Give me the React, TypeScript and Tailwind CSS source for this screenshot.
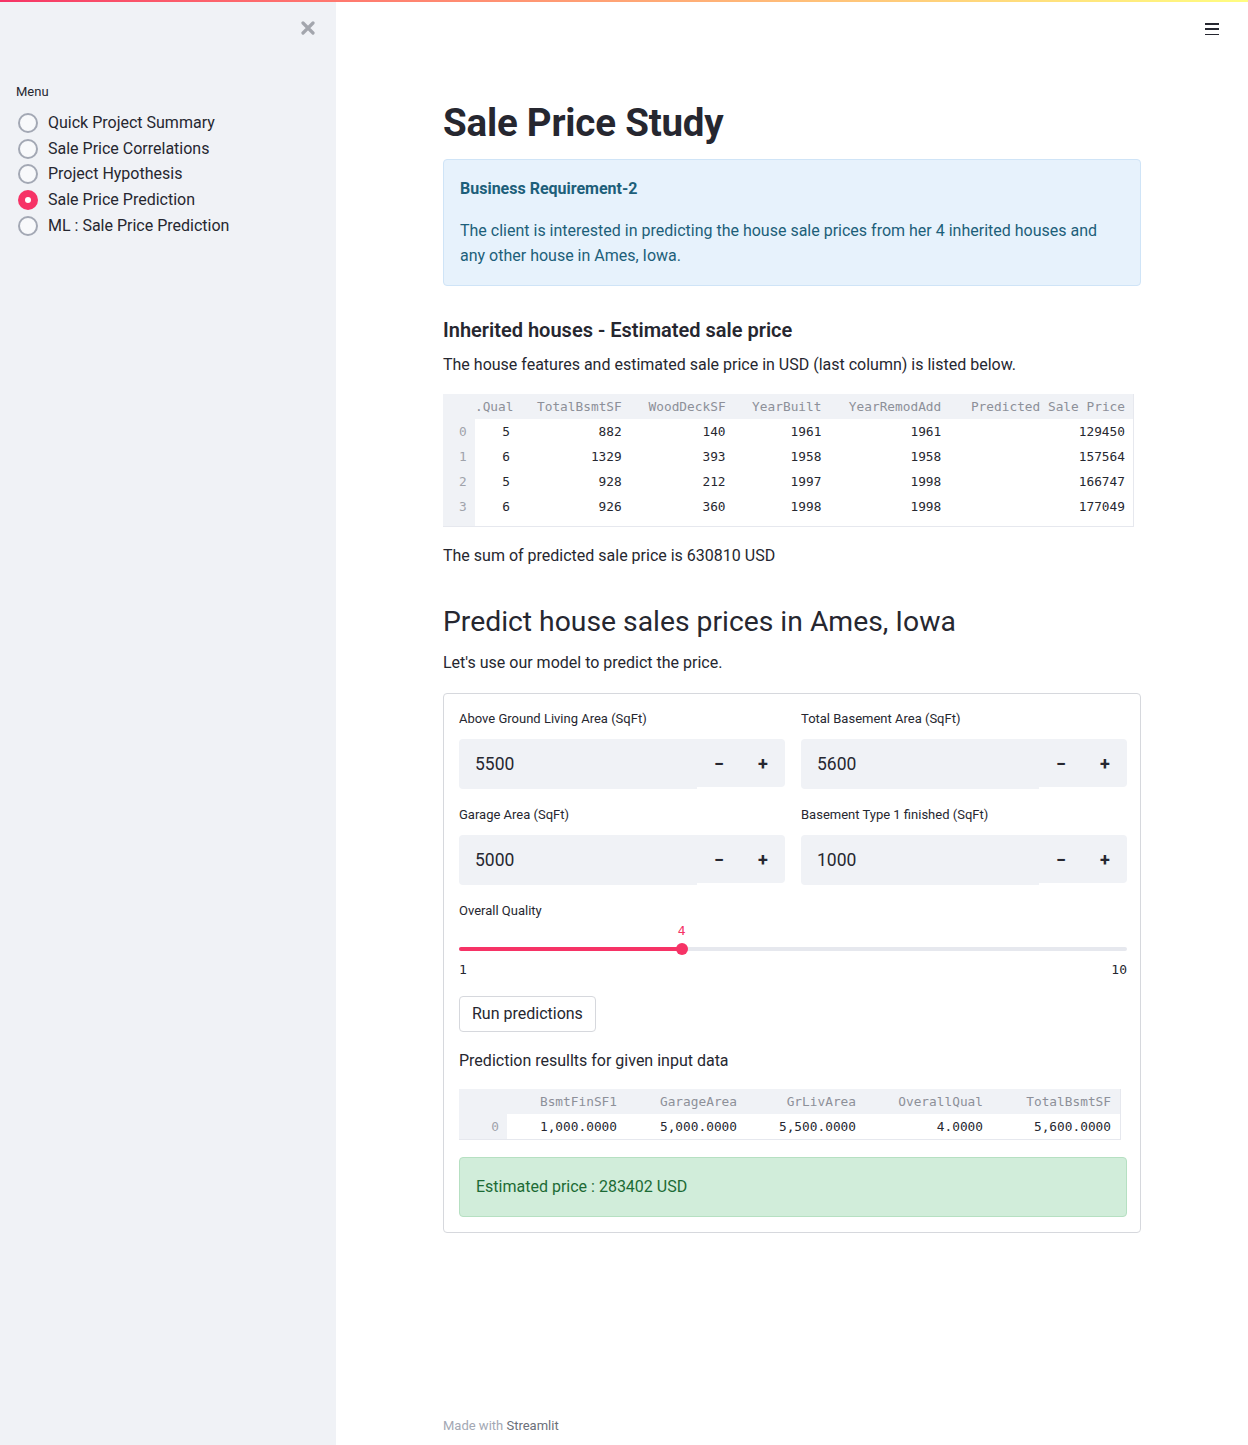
import React from 'react';

const SANS = "font-['Roboto','Liberation_Sans',sans-serif]";
const MONO = "font-['DejaVu_Sans_Mono','Liberation_Mono',monospace]";

const menuItems = [
  'Quick Project Summary',
  'Sale Price Correlations',
  'Project Hypothesis',
  'Sale Price Prediction',
  'ML : Sale Price Prediction',
];

const houseCols = ['.Qual', 'TotalBsmtSF', 'WoodDeckSF', 'YearBuilt', 'YearRemodAdd', 'Predicted Sale Price'];
const houseRows = [
  ['5', '882', '140', '1961', '1961', '129450'],
  ['6', '1329', '393', '1958', '1958', '157564'],
  ['5', '928', '212', '1997', '1998', '166747'],
  ['6', '926', '360', '1998', '1998', '177049'],
];

const predCols = ['BsmtFinSF1', 'GarageArea', 'GrLivArea', 'OverallQual', 'TotalBsmtSF'];
const predRow = ['1,000.0000', '5,000.0000', '5,500.0000', '4.0000', '5,600.0000'];

const Sidebar: React.FC = () => (
  <aside className="w-[336px] shrink-0 bg-[#f0f2f6] relative">
    <button className="absolute left-[301px] top-[21px] w-[14px] h-[14px] text-[#a3a6ad]" aria-label="Close sidebar">
      <svg viewBox="0 0 14 14" width="14" height="14">
        <path d="M2 2 L12 12 M12 2 L2 12" stroke="currentColor" strokeWidth="3.2" strokeLinecap="round" />
      </svg>
    </button>
    <div className="pt-[83px] pl-4">
      <div className="text-[13px] leading-[18px] text-[#262730]">Menu</div>
      <div className="mt-[9px] flex flex-col">
        {menuItems.map((item, i) => {
          const active = i === 3;
          return (
            <div key={item} className="flex items-center h-[25.75px]">
              <span className="w-8 flex items-center pl-[2px]">
                {active ? (
                  <span className="w-5 h-5 rounded-full bg-[#f63366] flex items-center justify-center">
                    <span className="w-[6px] h-[6px] rounded-full bg-white" />
                  </span>
                ) : (
                  <span className="w-5 h-5 rounded-full border-2 border-[#a3a8b4] bg-[#f8f9fb]" />
                )}
              </span>
              <span className="text-[16px] text-[#262730]">{item}</span>
            </div>
          );
        })}
      </div>
    </div>
  </aside>
);

const NumberInput: React.FC<{ label: string; value: string }> = ({ label, value }) => (
  <div>
    <div className="text-[13px] leading-[18px] text-[#262730]">{label}</div>
    <div className="mt-[11px] flex items-start">
      <div className="flex-1 h-[50px] bg-[#f0f2f6] rounded-l-[4px] flex items-center px-4 text-[17.5px] text-[#262730]">
        {value}
      </div>
      <div className="w-[88px] h-[48px] bg-[#f0f2f6] rounded-r-[4px] flex items-center">
        <span className="w-[44px] text-center text-[18px] font-bold text-[#262730]">−</span>
        <span className="w-[44px] text-center text-[18px] font-bold text-[#262730]">+</span>
      </div>
    </div>
  </div>
);

const HouseTable: React.FC = () => {
  const widths = ['w-[43px]', 'w-[112px]', 'w-[104px]', 'w-[96px]', 'w-[120px]', 'w-[184px]'];
  return (
    <div className={`mt-[17px] w-[691px] border-b border-r border-[#e6e8ee] ${MONO} text-[12.8px]`}>
      <div className="flex h-[25px] bg-[#f0f2f6] text-[#8d9099] items-center">
        <div className="w-[32px]" />
        {houseCols.map((c, i) => (
          <div key={c} className={`${widths[i]} text-right pr-2 whitespace-nowrap overflow-hidden`}>{c}</div>
        ))}
      </div>
      {houseRows.map((r, ri) => (
        <div key={ri} className="flex h-[25px] items-center">
          <div className="w-[32px] h-full bg-[#f0f2f6] text-[#a0a3ab] flex items-center pl-4">{ri}</div>
          {r.map((v, i) => (
            <div key={i} className={`${widths[i]} text-right pr-2 text-[#262730]`}>{v}</div>
          ))}
        </div>
      ))}
      <div className="flex h-[7px]">
        <div className="w-[32px] bg-[#f0f2f6]" />
      </div>
    </div>
  );
};

const PredTable: React.FC = () => {
  const widths = ['w-[119px]', 'w-[120px]', 'w-[119px]', 'w-[127px]', 'w-[128px]'];
  return (
    <div className={`mt-[16px] w-[662px] border-b border-r border-[#e6e8ee] ${MONO} text-[12.8px]`}>
      <div className="flex h-[25px] bg-[#f0f2f6] text-[#8d9099] items-center">
        <div className="w-[48px]" />
        {predCols.map((c, i) => (
          <div key={c} className={`${widths[i]} text-right pr-[9px]`}>{c}</div>
        ))}
      </div>
      <div className="flex h-[25px] items-center">
        <div className="w-[48px] h-full bg-[#f0f2f6] text-[#a0a3ab] flex items-center justify-end pr-[8px]">0</div>
        {predRow.map((v, i) => (
          <div key={i} className={`${widths[i]} text-right pr-[9px] text-[#262730]`}>{v}</div>
        ))}
      </div>
    </div>
  );
};

const Slider: React.FC = () => (
  <div>
    <div className="text-[13px] leading-[18px] text-[#262730]">Overall Quality</div>
    <div className="relative h-[20px] mt-[1px]">
      <span className={`absolute left-[33.33%] -translate-x-1/2 top-[2px] text-[13px] leading-[16px] text-[#f63366] ${MONO}`}>4</span>
    </div>
    <div className="relative h-[16px] flex items-center">
      <div className="w-full h-[4px] rounded-full bg-[#e6e8ee]" />
      <div className="absolute left-0 w-[33.33%] h-[4px] rounded-full bg-[#f63366]" />
      <div className="absolute left-[33.33%] -translate-x-1/2 w-[12px] h-[12px] rounded-full bg-[#f63366]" />
    </div>
    <div className={`mt-[4px] flex justify-between text-[13px] leading-[18px] text-[#262730] ${MONO}`}>
      <span>1</span>
      <span>10</span>
    </div>
  </div>
);

const App: React.FC = () => {
  return (
    <div className={`relative min-h-[1445px] flex ${SANS} text-[#262730]`}>
      <div className="absolute top-0 left-0 right-0 h-[2px] bg-gradient-to-r from-[#f63366] to-[#fffd80] z-10" />
      <Sidebar />
      <main className="flex-1 relative flex flex-col bg-white">
        <button className="absolute right-[29px] top-[22px] w-[14px] h-[14px] flex flex-col justify-between py-[1px]" aria-label="Menu">
          <span className="block h-[1.5px] bg-[#262730]" />
          <span className="block h-[1.5px] bg-[#262730]" />
          <span className="block h-[1.5px] bg-[#262730]" />
        </button>
        <div className="w-[698px] mx-auto pt-[96px]">
          <h1 className="text-[38.5px] leading-[54px] font-bold tracking-[-0.2px]">Sale Price Study</h1>
          <div className="mt-[9px] border border-[#cfe4f7] bg-[#e7f2fc] rounded-[4px] px-4 pt-[17px] pb-[17px] text-[#1d5f7a]">
            <div className="text-[16px] leading-6 font-bold">Business Requirement-2</div>
            <p className="mt-[17px] text-[16px] leading-[25px]">
              The client is interested in predicting the house sale prices from her 4 inherited houses and any other house in Ames, Iowa.
            </p>
          </div>
          <h3 className="mt-[29px] text-[20px] leading-[30px] font-semibold">Inherited houses - Estimated sale price</h3>
          <p className="mt-2 text-[16px] leading-6">
            The house features and estimated sale price in USD (last column) is listed below.
          </p>
          <HouseTable />
          <p className="mt-[17px] text-[16px] leading-6">The sum of predicted sale price is 630810 USD</p>
          <h2 className="mt-[34px] text-[28.3px] leading-[40px] font-normal">Predict house sales prices in Ames, Iowa</h2>
          <p className="mt-[9px] text-[16px] leading-6">Let's use our model to predict the price.</p>

          <div className="mt-[18px] border border-[#d6d8dd] rounded-[4px] pl-[15px] pr-[13px] pt-4 pb-[15px]">
            <div className="grid grid-cols-2 gap-x-4 gap-y-[17px]">
              <NumberInput label="Above Ground Living Area (SqFt)" value="5500" />
              <NumberInput label="Total Basement Area (SqFt)" value="5600" />
              <NumberInput label="Garage Area (SqFt)" value="5000" />
              <NumberInput label="Basement Type 1 finished (SqFt)" value="1000" />
            </div>
            <div className="mt-[17px]">
              <Slider />
            </div>
            <button className="mt-[17px] h-[36px] px-3 border border-[#d6d8dd] rounded-[4px] bg-white text-[16px] text-[#262730]">
              Run predictions
            </button>
            <p className="mt-[17px] text-[16px] leading-6">Prediction resullts for given input data</p>
            <PredTable />
            <div className="mt-[17px] border border-[#b6e0c2] bg-[#d1edda] rounded-[4px] px-4 py-4 text-[16px] leading-[26px] text-[#1c6b35]">
              Estimated price : 283402 USD
            </div>
          </div>
        </div>
        <footer className="mt-auto w-[698px] mx-auto pb-[10px] text-[13px] leading-[18px] text-[#a3a8b4]">
          Made with <span className="text-[#6b6f7a]">Streamlit</span>
        </footer>
      </main>
    </div>
  );
};

export default App;
